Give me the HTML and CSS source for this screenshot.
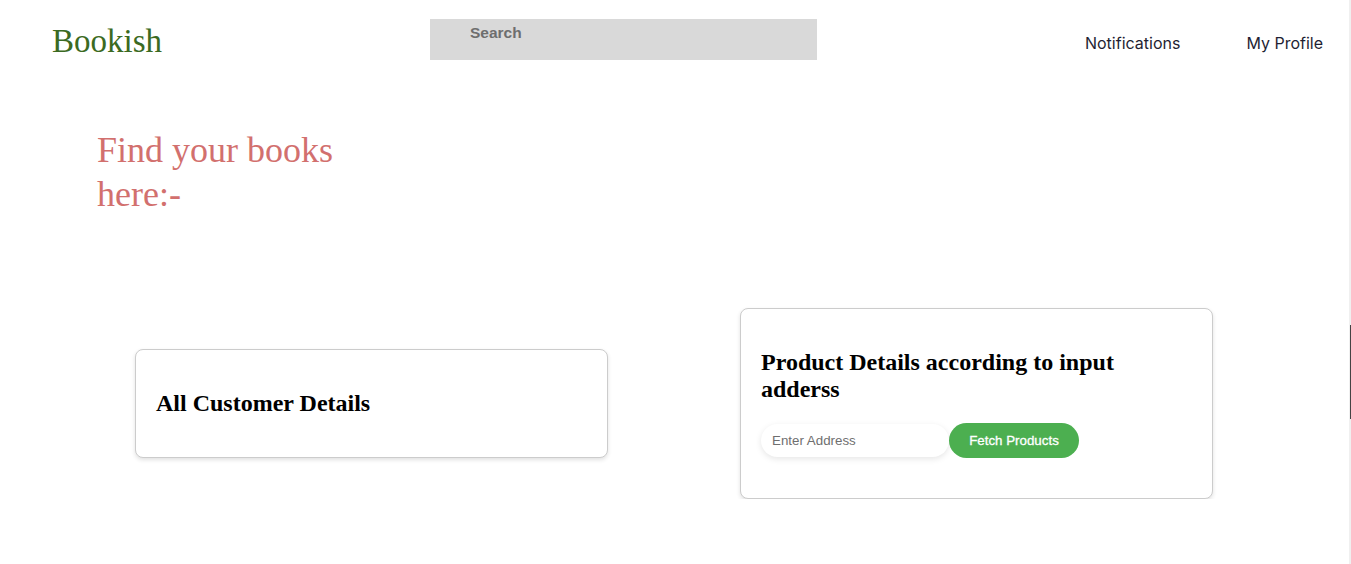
FILE: index.html
```html
<!DOCTYPE html>
<html lang="en">
<head>
<meta charset="utf-8">
<title>Bookish</title>
<link rel="stylesheet" href="styles.css">
</head>
<body>
<header class="topbar">
  <div class="logo">Bookish</div>
  <input class="search" type="text" placeholder="Search">
  <nav class="nav">
    <a class="nav-link" href="#">Notifications</a>
    <a class="nav-link" href="#">My Profile</a>
  </nav>
</header>
<main class="main">
  <h1 class="hero">Find your books here:-</h1>
  <section class="cards">
    <div class="card">
      <h2 class="card-title">All Customer Details</h2>
    </div>
    <div class="card">
      <h2 class="card-title">Product Details according to input adderss</h2>
      <div class="form-row">
        <input class="address" type="text" placeholder="Enter Address">
        <button class="fetch">Fetch Products</button>
      </div>
    </div>
  </section>
</main>
<div class="scrolltrack"><div class="scrollthumb"></div></div>
</body>
</html>
```
FILE: styles.css
```css
* { box-sizing: border-box; }
html, body { margin: 0; padding: 0; background: #fff; }
body { font-family: "Liberation Serif", serif; overflow: hidden; }

.topbar {
  display: flex;
  align-items: center;
  height: 79px;
  padding: 0 28px 0 52px;
}
.logo {
  width: 378px;
  font-family: "Liberation Serif", serif;
  font-size: 33px;
  color: #3b6a22;
  padding-top: 4px;
}
.search {
  width: 387px;
  height: 41px;
  border: none;
  background: #d9d9d9;
  padding: 0 0 13px 40px;
  font-family: "Liberation Sans", Arial, sans-serif;
  font-size: 15.5px;
  font-weight: 600;
  outline: none;
}
.search::placeholder { color: #6e6e6e; }
.nav {
  margin-left: auto;
  display: flex;
  gap: 66px;
  margin-top: 7px;
}
.nav-link {
  font-family: Inter, sans-serif;
  font-size: 16px;
  color: #1f1f33;
  text-decoration: none;
}

.main { padding: 49px 0 0 0; }
.hero {
  margin: 0 0 0 97px;
  width: 260px;
  font-family: "Liberation Serif", serif;
  font-weight: normal;
  font-size: 36px;
  line-height: 44px;
  color: #d2706e;
}
.cards {
  display: flex;
  align-items: center;
  gap: 132px;
  padding-left: 135px;
  margin-top: 92px;
}
.card {
  width: 473px;
  border: 1px solid #cccccc;
  border-radius: 8px;
  box-shadow: 0 2px 4px rgba(0, 0, 0, 0.12);
  padding: 20px;
  background: #fff;
}
.card-title {
  margin: 20px 0;
  font-family: "Liberation Serif", serif;
  font-weight: bold;
  font-size: 24px;
  line-height: 27px;
  color: #000;
}
.form-row {
  display: flex;
  align-items: center;
  margin-bottom: 20px;
}
.address {
  width: 188px;
  height: 33px;
  border: none;
  border-radius: 17px;
  box-shadow: 0 2px 6px rgba(0, 0, 0, 0.1);
  padding: 0 11px;
  font-family: "Liberation Sans", Arial, sans-serif;
  font-size: 13.33px;
  outline: none;
}
.address::placeholder { color: #6f6f6f; }
.fetch {
  width: 130px;
  height: 35px;
  border: none;
  border-radius: 18px;
  background: #4caf50;
  color: #fff;
  font-family: "Liberation Sans", Arial, sans-serif;
  font-weight: normal;
  font-size: 13.33px;
  -webkit-text-stroke: 0.3px #fff;
}

.scrolltrack {
  position: fixed;
  top: 0;
  right: 0;
  width: 2px;
  height: 100%;
  background: #f0f0f0;
}
.scrollthumb {
  position: absolute;
  top: 325px;
  right: 0;
  width: 1px;
  height: 94px;
  background: #444;
}
```
